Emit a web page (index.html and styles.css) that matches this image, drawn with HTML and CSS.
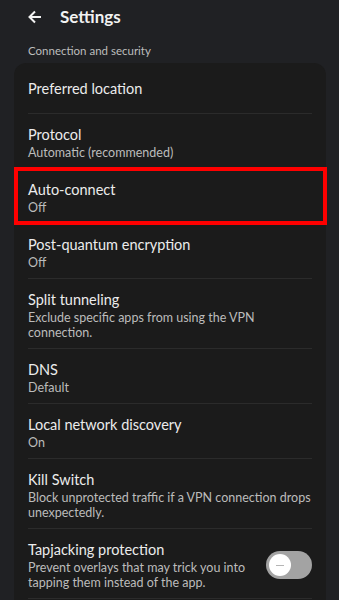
FILE: index.html
```html
<!DOCTYPE html>
<html lang="en">
<head>
    <meta charset="UTF-8">
    <title>Settings</title>
    <link rel="stylesheet" href="styles.css">
</head>
<body>
    <div class="topbar">
        <svg class="back" width="14" height="14" viewBox="0 0 14 14">
            <path d="M13 7H2M7 1.5L1.5 7L7 12.5" fill="none" stroke="#f2f2f2" stroke-width="2"/>
        </svg>
        <h1>Settings</h1>
    </div>

    <div class="section-label">Connection and security</div>

    <div class="card">
        <div class="row single">
            <div class="title">Preferred location</div>
        </div>
        <div class="row">
            <div class="title">Protocol</div>
            <div class="sub">Automatic (recommended)</div>
        </div>
        <div class="row highlight">
            <div class="title">Auto-connect</div>
            <div class="sub">Off</div>
        </div>
        <div class="row">
            <div class="title">Post-quantum encryption</div>
            <div class="sub">Off</div>
        </div>
        <div class="row">
            <div class="title">Split tunneling</div>
            <div class="sub">Exclude specific apps from using the VPN connection.</div>
        </div>
        <div class="row">
            <div class="title">DNS</div>
            <div class="sub">Default</div>
        </div>
        <div class="row">
            <div class="title">Local network discovery</div>
            <div class="sub">On</div>
        </div>
        <div class="row">
            <div class="title">Kill Switch</div>
            <div class="sub">Block unprotected traffic if a VPN connection drops unexpectedly.</div>
        </div>
        <div class="row with-toggle">
            <div class="text">
                <div class="title">Tapjacking protection</div>
                <div class="sub">Prevent overlays that may trick you into tapping them instead of the app.</div>
            </div>
            <div class="toggle"><span class="knob"></span></div>
        </div>
    </div>
</body>
</html>
```

FILE: styles.css
```css
html, body { margin: 0; padding: 0; }
body { background: #202124; color: #ececec; font-family: Lato, "Open Sans", sans-serif; overflow: hidden; }

.topbar { display: flex; align-items: center; height: 33px; padding-left: 28px; }
.back { margin-right: 18px; }
.topbar h1 { margin: 0; font-size: 17px; font-weight: bold; color: #f2f2f2; }

.section-label { font-size: 11.5px; color: #bdbdbd; padding: 11px 28px 0; height: 19px; }

.card { background: #1b1b1b; margin: 0 13px 0 14px; padding: 0 14px; border-radius: 12px 12px 0 0; min-height: 600px; }
.row { position: relative; padding: 11px 0 8px; border-bottom: 1px solid #2b2b2b; }
.row.single { padding: 16px 0 14px; }
.title { font-size: 14.5px; line-height: 20px; color: #ececec; }
.sub { font-size: 12.5px; line-height: 15px; color: #bcbcbc; }

.highlight::after { content: ""; position: absolute; left: -14px; right: -15px; top: -2px; bottom: -2px; border: 4px solid #ff0000; }

.with-toggle { display: flex; align-items: center; justify-content: space-between; }
.with-toggle .text { width: 240px; }
.toggle { width: 46px; height: 28px; border-radius: 14px; background: #a3a3a3; display: flex; align-items: center; padding-left: 3px; box-sizing: border-box; }
.knob { width: 22px; height: 22px; border-radius: 50%; background: #fff; position: relative; }
.knob::after { content: ""; position: absolute; left: 7px; top: 10.5px; width: 8px; height: 1px; background: #b5b5b5; }
```
